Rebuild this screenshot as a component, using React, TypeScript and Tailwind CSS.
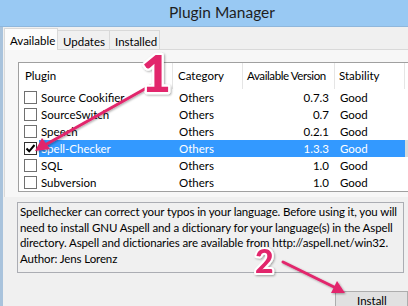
import React from "react";

const plugins = [
  { name: "Source Cookifier", category: "Others", version: "0.7.3", stability: "Good", checked: false, selected: false },
  { name: "SourceSwitch", category: "Others", version: "0.7", stability: "Good", checked: false, selected: false },
  { name: "Speech", category: "Others", version: "0.2.1", stability: "Good", checked: false, selected: false },
  { name: "Spell-Checker", category: "Others", version: "1.3.3", stability: "Good", checked: true, selected: true },
  { name: "SQL", category: "Others", version: "1.0", stability: "Good", checked: false, selected: false },
  { name: "Subversion", category: "Others", version: "1.0", stability: "Good", checked: false, selected: false },
];

const font = { fontFamily: 'Lato, "Noto Sans", sans-serif' };

function Checkbox({ checked }: { checked: boolean }) {
  return (
    <div
      className={`w-[13px] h-[13px] border bg-white flex items-center justify-center shrink-0 ${
        checked ? "border-[#333]" : "border-[#707070]"
      }`}
    >
      {checked && (
        <svg width="11" height="11" viewBox="0 0 11 11">
          <path d="M1.5 5.5 L4.2 8.3 L9.5 2" fill="none" stroke="#000" strokeWidth="2" />
        </svg>
      )}
    </div>
  );
}

function Annotations() {
  return (
    <svg className="absolute inset-0 pointer-events-none" width="408" height="306" viewBox="0 0 408 306">
      <defs>
        <filter id="sh" x="-20%" y="-20%" width="140%" height="140%">
          <feDropShadow dx="1" dy="1" stdDeviation="1" floodColor="#000" floodOpacity="0.35" />
        </filter>
      </defs>
      <g filter="url(#sh)">
        <line x1="150" y1="86" x2="45" y2="145" stroke="#e2256c" strokeWidth="3" strokeLinecap="round" />
        <polygon points="35,151 42,138 50,149" fill="#e2256c" />
        <line x1="283" y1="262" x2="334" y2="287" stroke="#e2256c" strokeWidth="3" strokeLinecap="round" />
        <polygon points="345,293 331,293 337,281" fill="#e2256c" />
        <text
          x="141"
          y="92"
          fontFamily="Lato, 'Open Sans', sans-serif"
          fontWeight="900"
          fontSize="52"
          fill="#e2256c"
          stroke="#fff"
          strokeWidth="4.5"
          paintOrder="stroke"
          strokeLinejoin="round"
        >
          1
        </text>
        <text
          x="255"
          y="273"
          fontFamily="Lato, 'Open Sans', sans-serif"
          fontWeight="900"
          fontSize="32"
          fill="#e2256c"
          stroke="#fff"
          strokeWidth="4"
          paintOrder="stroke"
          strokeLinejoin="round"
        >
          2
        </text>
      </g>
    </svg>
  );
}

export default function App() {
  return (
    <div className="relative w-[408px] h-[306px] overflow-hidden bg-[#f0f0f0] text-[11.5px] text-black whitespace-nowrap" style={font}>
      {/* Title bar */}
      <div className="h-[27px] bg-[#99c9f3] border-b border-[#8fb7dc] pl-[169px] flex items-center text-[15.5px] text-[#1e1e1e]">
        Plugin Manager
      </div>

      <div className="border-l-[3px] border-[#a9c3dc] h-[279px]">
        {/* Tabs */}
        <div className="flex items-end h-[22px] ml-[1px] pt-[1px]">
          <div className="relative z-10 w-[54px] h-[22px] -mb-[1px] border border-b-0 border-[#d9d9d9] bg-[#fcfcfc] pl-[5px] pt-[3px]">
            Available
          </div>
          <div className="w-[52px] h-[19px] border border-b-0 border-l-0 border-[#d9d9d9] bg-[#f0f0f0] pl-[5px] pt-[2px]">
            Updates
          </div>
          <div className="w-[50px] h-[19px] border border-b-0 border-l-0 border-[#d9d9d9] bg-[#f0f0f0] pl-[5px] pt-[2px]">
            Installed
          </div>
        </div>

        {/* Panel */}
        <div className="ml-[1px] border-t border-l border-[#d9d9d9] bg-[#f7f7f7] h-[148px] pl-[13px] pt-[12px]">
          <div className="border border-[#a0a0a0] bg-white w-[420px] h-[130px]">
            {/* Header */}
            <div className="flex h-[26px] items-center">
              <div className="w-[154px] pl-[6px] h-full flex items-center border-r border-[#e5e5e5]">Plugin</div>
              <div className="w-[70px] pl-[5px] h-full flex items-center border-r border-[#e5e5e5]">Category</div>
              <div className="w-[92px] pl-[4px] h-full flex items-center border-r border-[#e5e5e5] tracking-[-0.4px]">
                Available Version
              </div>
              <div className="w-[70px] pl-[4px] h-full flex items-center border-r border-[#e5e5e5]">Stability</div>
            </div>
            {plugins.map((p) => (
              <div key={p.name} className="flex h-[17px] items-center">
                <div className="w-[20px] pl-[5px] flex items-center">
                  <Checkbox checked={p.checked} />
                </div>
                <div className={`flex h-full items-center ${p.selected ? "bg-[#3399ff] text-white" : ""}`}>
                  <div className="w-[134px] pl-[2px]">{p.name}</div>
                  <div className="w-[70px] pl-[6px]">{p.category}</div>
                  <div className="w-[92px] pr-[6px] text-right">{p.version}</div>
                  <div className="w-[70px] pl-[5px]">{p.stability}</div>
                </div>
                {p.selected && <div className="h-full flex-1 bg-[#d9d9d9]" />}
              </div>
            ))}
          </div>
        </div>

        {/* Description */}
        <div className="ml-[14px] mt-[5px] w-[387px] h-[71px] border border-[#abadb3] bg-[#f0f0f0] px-[2px] pt-[1px] leading-[15.5px] tracking-[-0.12px]">
          <div>Spellchecker can correct your typos in your language. Before using it, you will</div>
          <div>need to install GNU Aspell and a dictionary for your language(s) in the Aspell</div>
          <div>directory. Aspell and dictionaries are available from http://aspell.net/win32.</div>
          <div>Author: Jens Lorenz</div>
        </div>

        {/* Buttons */}
        <div className="flex justify-start pl-[332px] mt-[18px]">
          <div className="w-[90px] h-[24px] border border-[#adadad] bg-[#e1e1e1] pl-[21px] pt-[2px] leading-[14px]">Install</div>
        </div>
      </div>

      <Annotations />
    </div>
  );
}
